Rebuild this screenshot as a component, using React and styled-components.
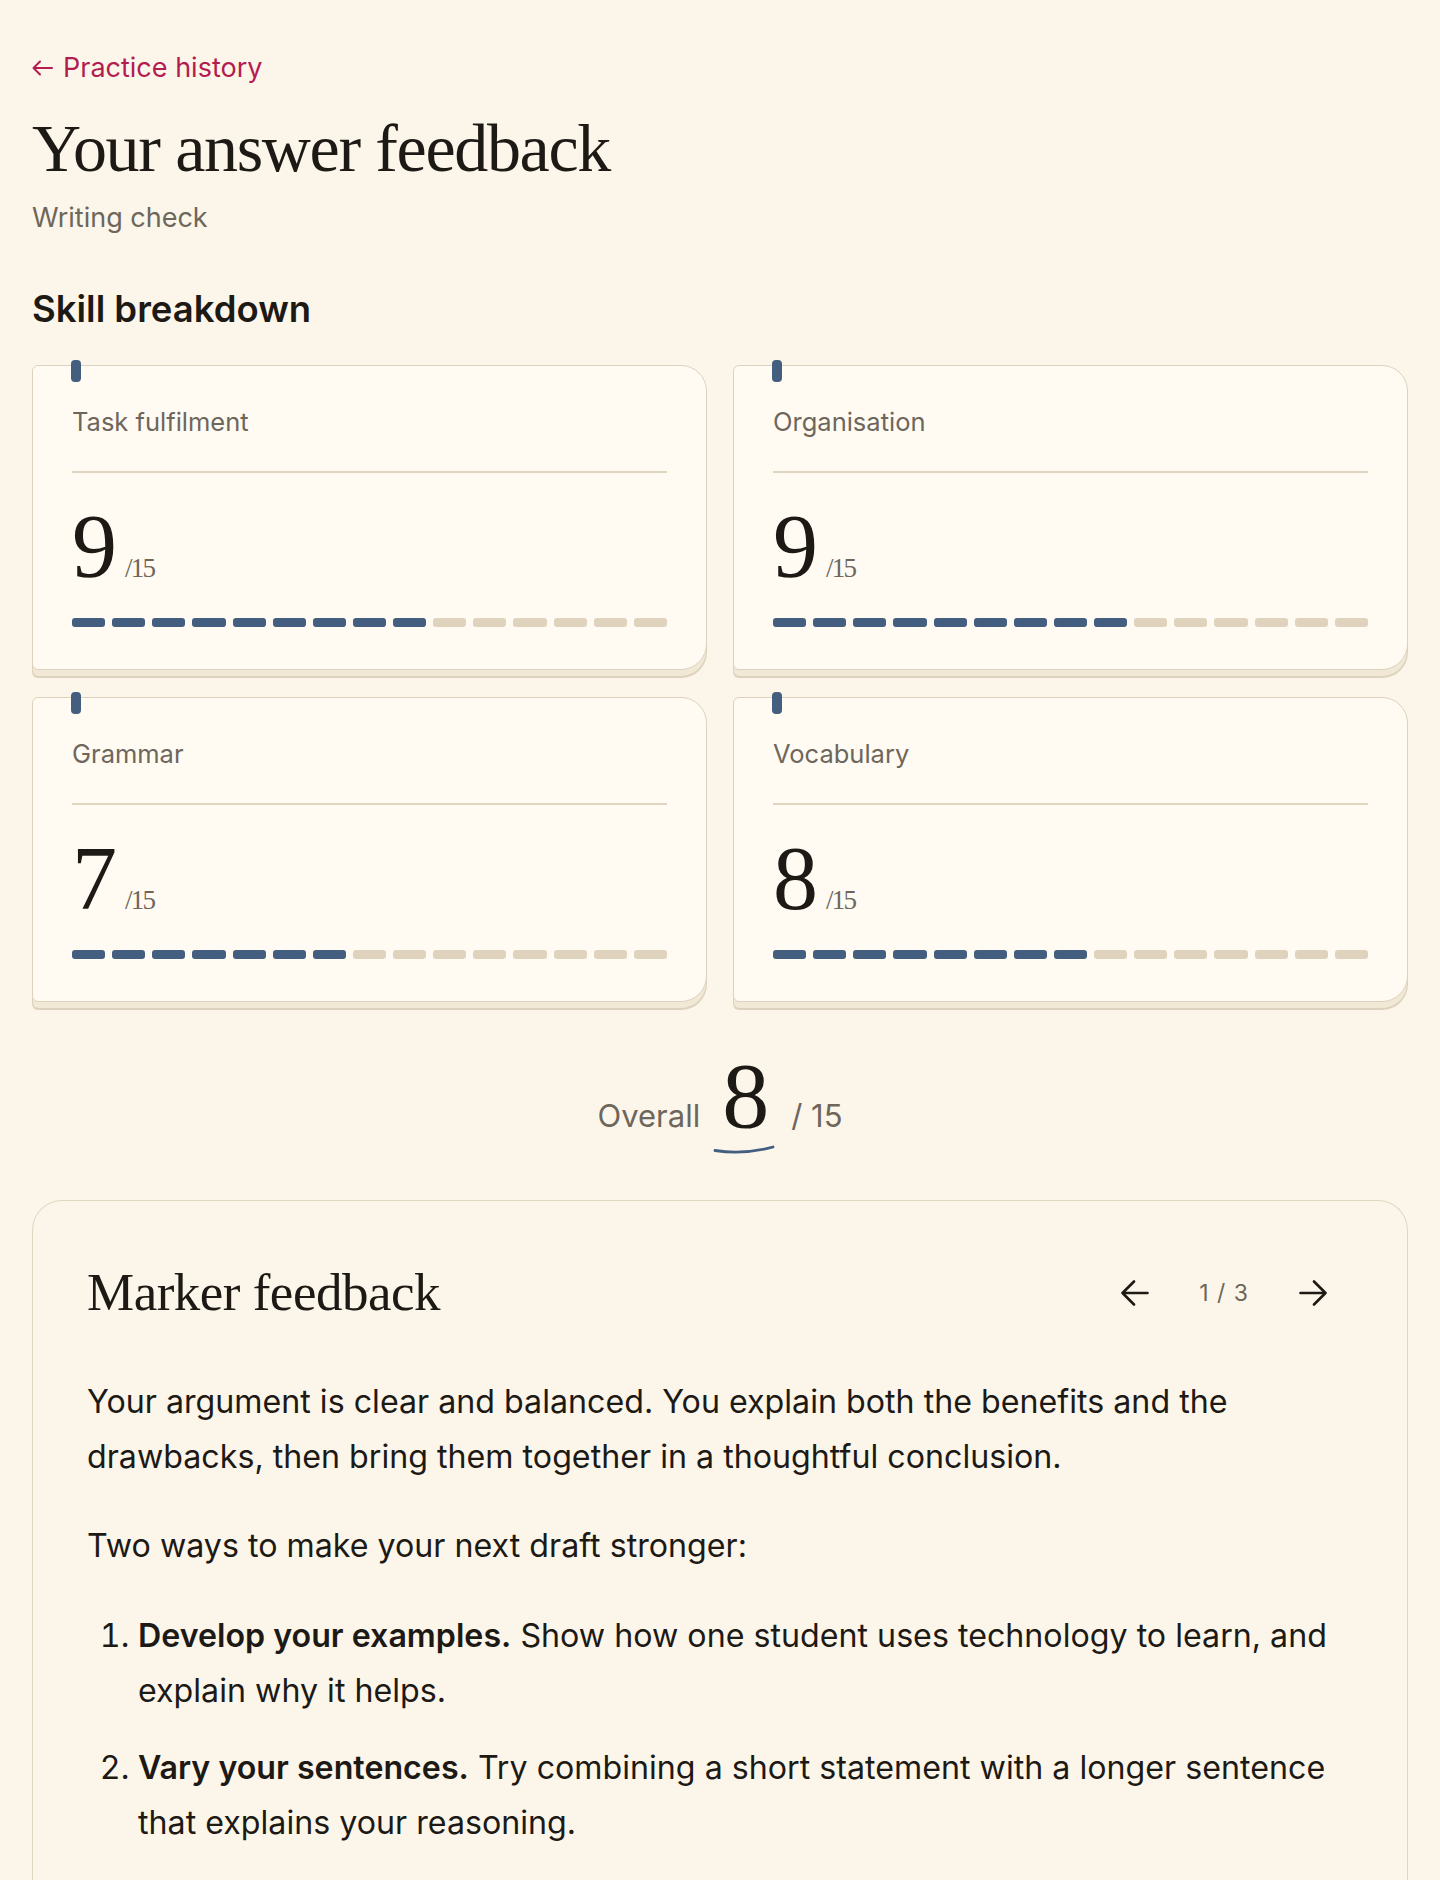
import styled, { createGlobalStyle } from 'styled-components'

const GlobalStyle = createGlobalStyle`
  html, body {
    margin: 0;
    padding: 0;
    background: #fcf6ea;
  }
  body {
    font-family: Inter, "Noto Sans", sans-serif;
    color: #1d1915;
  }
  * { box-sizing: border-box; }
`;

const Page = styled.div`
  padding: 50px 32px 0;
  display: flex;
  flex-direction: column;
`;

const BackLink = styled.a`
  display: inline-flex;
  align-items: center;
  gap: 10px;
  align-self: flex-start;
  font-size: 27px;
  line-height: 36px;
  color: #b41c50;
  text-decoration: none;
  cursor: pointer;
  svg { width: 21px; height: 16px; }
`;

const Title = styled.h1`
  margin: 25px 0 0;
  font-family: "Liberation Serif", serif;
  font-weight: 400;
  font-size: 68px;
  line-height: 1.1;
  letter-spacing: -1.35px;
  color: #1d1915;
`;

const Subtitle = styled.p`
  margin: 14px 0 0;
  font-size: 27px;
  line-height: 36px;
  color: #6e665b;
`;

const SectionTitle = styled.h2`
  margin: 51px 0 0;
  font-size: 36.5px;
  line-height: 44px;
  font-weight: 600;
  color: #1d1915;
`;

const Grid = styled.div`
  margin-top: 34px;
  display: grid;
  grid-template-columns: 1fr 1fr;
  column-gap: 26px;
  row-gap: 27px;
`;

const Card = styled.div`
  position: relative;
  background: #fffbf3;
  border: 1.5px solid #ddd2bd;
  border-radius: 6px 26px 26px 6px;
  padding: 39px 39px 42px;
  box-shadow: 0 7px 0 -1px #f1e8d6, 0 8px 0 0 #ddd2bd;
`;

const Mark = styled.span`
  position: absolute;
  left: 38px;
  top: -6px;
  width: 10px;
  height: 22px;
  border-radius: 4px;
  background: #445e7f;
`;

const Label = styled.div`
  font-size: 25.5px;
  line-height: 34px;
  color: #6e665b;
`;

const Divider = styled.hr`
  margin: 32px 0 0;
  border: 0;
  height: 2px;
  background: #e0d5c0;
`;

const ScoreRow = styled.div`
  margin-top: 29px;
  display: flex;
  align-items: baseline;
  gap: 8px;
  height: 90px;
`;

const Score = styled.span`
  font-family: "Liberation Serif", serif;
  font-size: ${p => p.size || 90}px;
  line-height: 1;
  color: #1d1915;
`;

const OutOf = styled.span`
  font-family: "Liberation Serif", serif;
  font-size: 27px;
  letter-spacing: -1.8px;
  color: #6e665b;
`;

const Segments = styled.div`
  margin-top: 26px;
  display: grid;
  grid-template-columns: repeat(15, 1fr);
  gap: 7px;
`;

const Segment = styled.span`
  height: 9px;
  border-radius: 3px;
  background: ${p => (p.on ? '#445e7f' : '#e0d3bd')};
`;

const OverallRow = styled.div`
  margin-top: 46px;
  display: flex;
  justify-content: center;
  align-items: baseline;
  gap: 22px;
  font-size: 31px;
  color: #6e665b;
`;

const OverallScore = styled.span`
  position: relative;
  display: inline-block;
  svg {
    position: absolute;
    left: -9px;
    bottom: -12px;
    width: 62px;
    height: 10px;
  }
`;

const FeedbackCard = styled.section`
  margin-top: 58px;
  border: 1.5px solid #e0d6c2;
  border-radius: 30px 30px 0 0;
  border-bottom: 0;
  padding: 60px 54px 80px;
`;

const FeedbackHead = styled.div`
  display: flex;
  align-items: center;
  justify-content: space-between;
`;

const FeedbackTitle = styled.h2`
  margin: 0;
  font-family: "Liberation Serif", serif;
  font-weight: 400;
  font-size: 53px;
  line-height: 1.2;
  letter-spacing: -0.5px;
  color: #1d1915;
`;

const Pager = styled.div`
  display: flex;
  align-items: center;
  gap: 24px;
`;

const PagerButton = styled.button`
  background: none;
  border: 0;
  padding: 14px 26px;
  cursor: pointer;
  display: flex;
  color: #1d1915;
  svg { width: 28px; height: 26px; }
`;

const Counter = styled.span`
  font-size: 23px;
  letter-spacing: 1px;
  color: #6e665b;
`;

const Body = styled.div`
  margin-top: 50px;
  font-size: 32.2px;
  line-height: 55px;
  color: #1d1915;
  p { margin: 0 0 34px; }
`;

const Steps = styled.ol`
  margin: 35px 0 0;
  padding-left: 51px;
  li { margin-bottom: 22px; }
  b { font-weight: 600; }
`;

const ArrowLeft = () => (
  <svg viewBox="0 0 28 26" fill="none" stroke="currentColor" strokeWidth="2.6" strokeLinecap="round" strokeLinejoin="round">
    <path d="M26.5 13H1.5M13 1.5L1.5 13L13 24.5" />
  </svg>
);

const ArrowRight = () => (
  <svg viewBox="0 0 28 26" fill="none" stroke="currentColor" strokeWidth="2.6" strokeLinecap="round" strokeLinejoin="round">
    <path d="M1.5 13H26.5M15 1.5L26.5 13L15 24.5" />
  </svg>
);

const skills = [
  { name: 'Task fulfilment', score: 9 },
  { name: 'Organisation', score: 9 },
  { name: 'Grammar', score: 7 },
  { name: 'Vocabulary', score: 8 },
];

const SkillCard = ({ skill }) => (
  <Card>
    <Mark />
    <Label>{skill.name}</Label>
    <Divider />
    <ScoreRow>
      <Score>{skill.score}</Score>
      <OutOf>/15</OutOf>
    </ScoreRow>
    <Segments>
      {Array.from({ length: 15 }).map((_, i) => (
        <Segment key={i} on={i < skill.score ? 1 : 0} />
      ))}
    </Segments>
  </Card>
);

export default function App() {
  return (
    <>
      <GlobalStyle />
      <Page>
        <BackLink>
          <svg viewBox="0 0 21 16" fill="none" stroke="currentColor" strokeWidth="2" strokeLinecap="round" strokeLinejoin="round">
            <path d="M20 8H1.5M8 1.5L1.5 8L8 14.5" />
          </svg>
          Practice history
        </BackLink>
        <Title>Your answer feedback</Title>
        <Subtitle>Writing check</Subtitle>

        <SectionTitle>Skill breakdown</SectionTitle>
        <Grid>
          {skills.map(s => <SkillCard key={s.name} skill={s} />)}
        </Grid>

        <OverallRow>
          <span>Overall</span>
          <OverallScore>
            <Score size={94}>8</Score>
            <svg viewBox="0 0 62 10" fill="none">
              <path d="M2 6.5C20 9.5 40 8.5 60 3" stroke="#445e7f" strokeWidth="2.8" strokeLinecap="round" />
            </svg>
          </OverallScore>
          <span>/ 15</span>
        </OverallRow>

        <FeedbackCard>
          <FeedbackHead>
            <FeedbackTitle>Marker feedback</FeedbackTitle>
            <Pager>
              <PagerButton aria-label="Previous"><ArrowLeft /></PagerButton>
              <Counter>1 / 3</Counter>
              <PagerButton aria-label="Next"><ArrowRight /></PagerButton>
            </Pager>
          </FeedbackHead>
          <Body>
            <p>
              Your argument is clear and balanced. You explain both the benefits and the
              drawbacks, then bring them together in a thoughtful conclusion.
            </p>
            <p>Two ways to make your next draft stronger:</p>
            <Steps>
              <li>
                <b>Develop your examples.</b> Show how one student uses technology to learn, and
                explain why it helps.
              </li>
              <li>
                <b>Vary your sentences.</b> Try combining a short statement with a longer sentence
                that explains your reasoning.
              </li>
            </Steps>
          </Body>
        </FeedbackCard>
      </Page>
    </>
  );
}
